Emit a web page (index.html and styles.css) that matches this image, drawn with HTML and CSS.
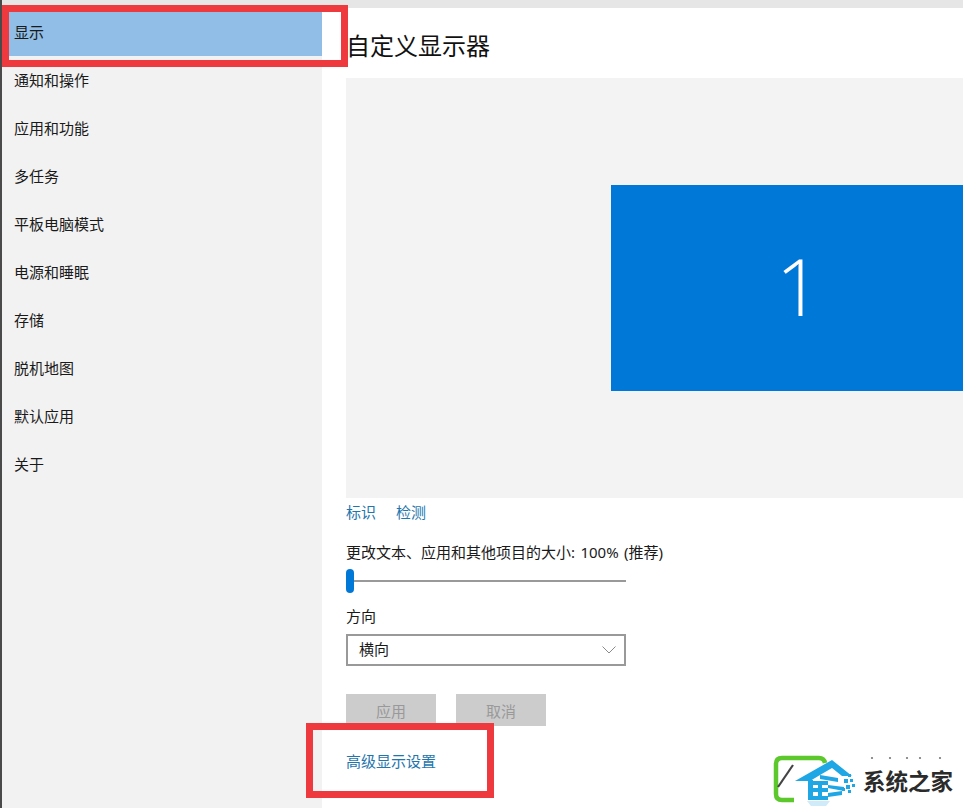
FILE: index.html
```html
<!DOCTYPE html>
<html lang="zh-CN">
<head>
<meta charset="utf-8">
<title>自定义显示器</title>
<link rel="stylesheet" href="styles.css">
</head>
<body>
<div class="window">
  <nav class="sidebar">
    <a class="nav-item selected">显示</a>
    <a class="nav-item">通知和操作</a>
    <a class="nav-item">应用和功能</a>
    <a class="nav-item">多任务</a>
    <a class="nav-item">平板电脑模式</a>
    <a class="nav-item">电源和睡眠</a>
    <a class="nav-item">存储</a>
    <a class="nav-item">脱机地图</a>
    <a class="nav-item">默认应用</a>
    <a class="nav-item">关于</a>
  </nav>
  <main class="content">
    <h1 class="title">自定义显示器</h1>
    <div class="preview"><div class="monitor">1</div></div>
    <div class="links"><a class="link">标识</a><a class="link">检测</a></div>
    <div class="label scale-label">更改文本、应用和其他项目的大小: 100% (推荐)</div>
    <div class="slider"><span class="thumb"></span></div>
    <div class="label orient-label">方向</div>
    <div class="select">
      <span class="select-value">横向</span>
      <svg class="chevron" width="14" height="8" viewBox="0 0 14 8"><path d="M0.5 0.5 L7 7 L13.5 0.5" fill="none" stroke="#8a8a8a" stroke-width="1"/></svg>
    </div>
    <div class="buttons"><button class="btn">应用</button><button class="btn">取消</button></div>
    <a class="link advanced">高级显示设置</a>
  </main>
</div>
<div class="mark mark-nav"></div>
<div class="mark mark-advanced"></div>
<div class="logo">
  <svg class="logo-art" width="90" height="58" viewBox="0 0 90 58">
    <path d="M24 50 H12 Q6 50 6 44 V14 Q6 8 12 8 H49 Q54 8 55 13" fill="none" stroke="#5cc82c" stroke-width="4.5"/>
    <path d="M8 37 L23 15" stroke="#444" stroke-width="2.2" fill="none"/>
    <path d="M25 31 L62 10 L82 26 L72 26 L62 18 L50 25 L40 31 Z" fill="#1ea7e4"/>
    <path d="M38 30 H43 V50 H38 Z M43 31 H58 V35 H43 Z M43 38 H58 V42 H43 Z M43 46 H58 V50 H43 Z M48 31 H52 V50 H48 Z" fill="#1ea7e4"/>
    <path d="M50 25 L68 28 V32 L50 29 Z M58 35 L74 37 V41 L58 38 Z M58 43 L72 41 V45 L58 47 Z" fill="#1ea7e4"/>
    <path d="M72 22h3v3h-3z M78 24h3v3h-3z M74 29h4v4h-4z M80 29h3v3h-3z M76 35h4v4h-4z M82 34h3v3h-3z M72 38h3v3h-3z M78 40h3v3h-3z" fill="#1ea7e4"/>
    <path d="M37 51 H60 L56 56 H41 Z" fill="#cfeaf8"/>
  </svg>
  <div class="logo-side">
    <svg class="logo-dots" width="74" height="4" viewBox="0 0 74 4"><circle cx="2" cy="2" r="1.1" fill="#777"/><circle cx="20" cy="2" r="1.1" fill="#777"/><circle cx="37" cy="2" r="1.1" fill="#777"/><circle cx="50" cy="2" r="1.1" fill="#777"/><circle cx="70" cy="2" r="1.1" fill="#777"/></svg>
    <span class="logo-text">系统之家</span>
  </div>
</div>
</body>
</html>
```
FILE: styles.css
```css
* { box-sizing: border-box; }
html, body { margin: 0; padding: 0; height: 100%; overflow: hidden; background: #fff; }
body {
  position: relative;
  font-family: "Noto Sans", "Noto Sans CJK SC", sans-serif;
  font-size: 15px;
  color: #1a1a1a;
}
.window {
  display: flex;
  height: 808px;
  padding-top: 8px;
  background: #e6e6e6;
  border-left: 2px solid #4a4a4a;
}
.sidebar {
  width: 320px;
  flex: none;
  background: #f2f2f2;
  display: flex;
  flex-direction: column;
}
.nav-item {
  height: 48px;
  line-height: 48px;
  padding-left: 12px;
}
.nav-item.selected { background: #90bee6; }
.content {
  flex: 1;
  min-width: 0;
  background: #fff;
  padding-left: 24px;
  display: flex;
  flex-direction: column;
  align-items: flex-start;
}
.title {
  margin: 21px 0 15px;
  font-size: 24px;
  line-height: 34px;
  font-weight: 400;
  color: #111;
}
.preview {
  align-self: stretch;
  height: 420px;
  background: #f3f3f3;
  display: flex;
  align-items: center;
  padding-left: 265px;
  overflow: hidden;
}
.monitor {
  flex: none;
  width: 372px;
  height: 206px;
  padding-bottom: 8px;
  padding-left: 3px;
  background: #0078d7;
  color: #fff;
  display: flex;
  align-items: center;
  justify-content: center;
  font-family: "Open Sans", sans-serif;
  font-weight: 300;
  font-size: 80px;
}
.links { display: flex; gap: 20px; margin-top: 4px; }
.link { color: #1f76ad; line-height: 20px; }
.label { line-height: 20px; }
.scale-label { margin-top: 20px; word-spacing: 1.5px; }
.slider {
  position: relative;
  width: 280px;
  height: 24px;
  margin-top: 7px;
  display: flex;
  align-items: center;
}
.slider::before { content: ""; display: block; width: 100%; height: 2px; background: #999; }
.thumb {
  position: absolute;
  left: 0;
  top: 0;
  width: 8px;
  height: 24px;
  border-radius: 4px;
  background: #0078d7;
}
.orient-label { margin-top: 13px; margin-bottom: 1px; }
.select {
  width: 280px;
  height: 32px;
  margin-top: 7px;
  border: 2px solid #999;
  padding: 0 8px 0 11px;
  display: flex;
  align-items: center;
  justify-content: space-between;
  background: #fff;
}
.select-value { line-height: 20px; padding-bottom: 3px; }
.buttons { display: flex; gap: 20px; margin-top: 28px; }
.btn {
  width: 90px;
  height: 32px;
  border: 0;
  padding: 0;
  background: #ccc;
  color: #999;
  font: inherit;
}
.advanced { margin-top: 25px; }
.mark {
  position: absolute;
  border: 7px solid #ee3a3f;
}
.mark-nav { left: 2px; top: 5px; width: 346px; height: 62px; }
.mark-advanced { left: 306px; top: 723px; width: 188px; height: 75px; }
.logo {
  position: absolute;
  left: 770px;
  top: 750px;
  width: 193px;
  height: 58px;
  display: flex;
}
.logo-art { flex: none; }
.logo-side { display: flex; flex-direction: column; margin-left: 3px; }
.logo-dots { margin: 6px 0 0 7px; }
.logo-text {
  font-family: "Noto Sans CJK SC", sans-serif;
  font-size: 22.5px;
  font-weight: 700;
  line-height: 30px;
  margin-top: 5px;
  color: #2b2b2b;
  white-space: nowrap;
}
```
